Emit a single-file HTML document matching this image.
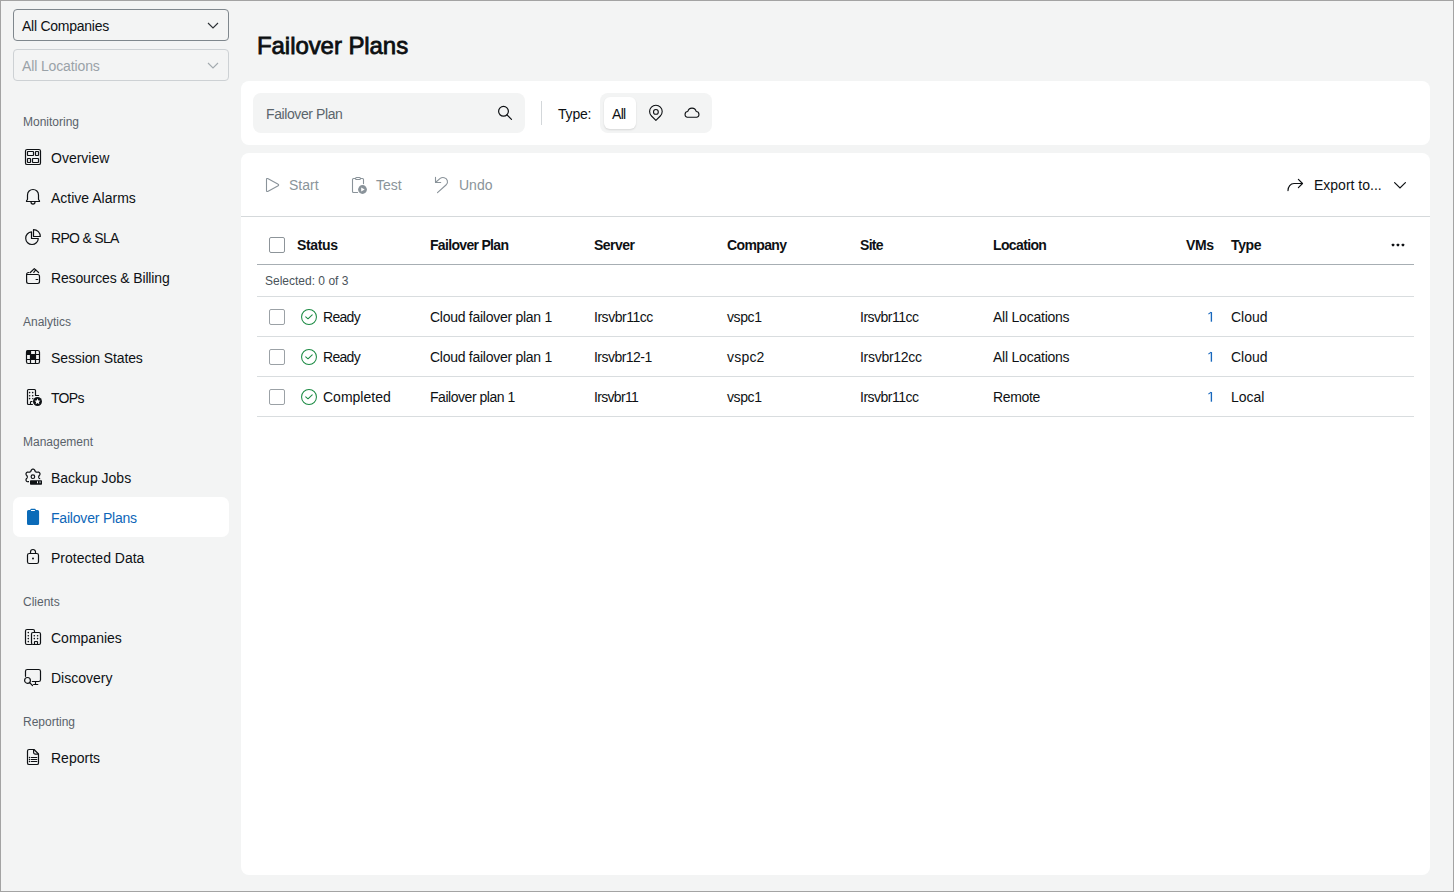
<!DOCTYPE html>
<html><head><meta charset="utf-8">
<style>
*{margin:0;padding:0;box-sizing:border-box}
html,body{width:1454px;height:892px;overflow:hidden}
body{position:relative;background:#f3f4f4;font-family:"Liberation Sans",sans-serif;color:#0e1114;font-size:14px}
.frame{position:absolute;left:0;top:0;width:1454px;height:892px;border:1px solid #a3a3a3;pointer-events:none;z-index:50}
.abs{position:absolute}
.t{position:absolute;white-space:nowrap;line-height:20px}
svg{position:absolute;overflow:visible}
.dd{position:absolute;left:13px;width:216px;height:32px;border:1px solid #7f878d;border-radius:4px}
.dd2{border-color:#cdd1d4}
.sec{position:absolute;left:23px;font-size:12px;line-height:16px;color:#59626a}
.item{position:absolute;left:13px;width:216px;height:40px;border-radius:7px}
.nv{left:51px;color:#0e1114}
.active{background:#fff}
.nv.active{background:none;color:#0d66b8}
.card{position:absolute;left:241px;width:1189px;background:#fff;border-radius:8px}
.hd{font-weight:700;letter-spacing:-0.35px}
.line{position:absolute;height:1px;background:#d9dddf}
.cb{position:absolute;width:16px;height:16px;border:1.5px solid #9ba1a6;border-radius:2px;background:#fff}
.gray{color:#8a949a}
.blue{color:#1f6dbb}
</style></head>
<body>
<div class="frame"></div>

<div class="dd" style="top:9px"></div>
<div class="t" style="left:22px;top:16px;letter-spacing:-0.25px">All Companies</div>
<svg style="left:207px;top:22px" width="12" height="7" viewBox="0 0 12 7"><path d="M1 1l5 5 5-5" fill="none" stroke="#2b3034" stroke-width="1.1"/></svg>
<div class="dd dd2" style="top:49px"></div>
<div class="t" style="left:22px;top:56px;color:#9aa2a8;letter-spacing:-0.13px">All Locations</div>
<svg style="left:207px;top:62px" width="12" height="7" viewBox="0 0 12 7"><path d="M1 1l5 5 5-5" fill="none" stroke="#a3aaaf" stroke-width="1.1"/></svg>

<div class="sec" style="top:114px">Monitoring</div>
<div class="sec" style="top:314px">Analytics</div>
<div class="sec" style="top:434px">Management</div>
<div class="sec" style="top:594px">Clients</div>
<div class="sec" style="top:714px">Reporting</div>

<div class="item" style="top:137px"></div><svg style="left:20px;top:144px" width="26" height="26" viewBox="0 0 26 26"><g stroke="#0e1114" stroke-width="1.2" fill="none" stroke-linecap="round" stroke-linejoin="round"><rect x="5.5" y="5.5" width="15" height="15" rx="1.6"/><rect x="7.5" y="7.5" width="6" height="4" rx="0.5"/><rect x="15.5" y="7.5" width="3" height="4" rx="0.5"/><rect x="7.5" y="14.5" width="3" height="4" rx="0.5"/><rect x="12.5" y="14.5" width="6" height="4" rx="0.5"/></g></svg><div class="t nv" style="top:148px;letter-spacing:0px">Overview</div>
<div class="item" style="top:177px"></div><svg style="left:20px;top:184px" width="26" height="26" viewBox="0 0 26 26"><g stroke="#0e1114" stroke-width="1.2" fill="none" stroke-linecap="round" stroke-linejoin="round"><path d="M7.5 15.2V11C7.5 7.8 10 5.5 13 5.5S18.5 7.8 18.5 11V15.2C18.5 15.9 19.5 16.3 19.5 17V17.5H6.5V17C6.5 16.3 7.5 15.9 7.5 15.2Z"/><path d="M11 18.1A2 2 0 0 0 15 18.1"/></g></svg><div class="t nv" style="top:188px;letter-spacing:0px">Active Alarms</div>
<div class="item" style="top:217px"></div><svg style="left:20px;top:224px" width="26" height="26" viewBox="0 0 26 26"><g stroke="#0e1114" stroke-width="1.2" fill="none" stroke-linecap="round" stroke-linejoin="round"><path d="M11.5 7.9A6.3 6.3 0 1 0 18.3 14.5H11.5Z"/><path d="M13.5 5.7V12.5H20.3A6.8 6.8 0 0 0 13.5 5.7Z"/></g></svg><div class="t nv" style="top:228px;letter-spacing:-0.7px">RPO &amp; SLA</div>
<div class="item" style="top:257px"></div><svg style="left:20px;top:264px" width="26" height="26" viewBox="0 0 26 26"><g stroke="#0e1114" stroke-width="1.2" fill="none" stroke-linecap="round" stroke-linejoin="round"><path d="M6.6 10.5H17.6A1.9 1.9 0 0 1 19.5 12.4V17.6A1.9 1.9 0 0 1 17.6 19.5H8.5A1.9 1.9 0 0 1 6.6 17.6V10.5A2 2 0 0 1 8.6 8.5H9"/><path d="M10.3 8.5L14.3 4.6L18.6 8.5"/><path d="M13.8 8.4L15.7 5.9"/><path d="M16.1 15.5H17.7"/></g></svg><div class="t nv" style="top:268px;letter-spacing:-0.15px">Resources &amp; Billing</div>
<div class="item" style="top:337px"></div><svg style="left:20px;top:344px" width="26" height="26" viewBox="0 0 26 26"><g stroke="#0e1114" stroke-width="1.2" fill="none" stroke-linecap="round" stroke-linejoin="round"><rect x="6.5" y="6.5" width="13" height="13" rx="1.8"/><path d="M10.5 6.5V19.5M15.5 6.5V19.5M6.5 10.5H19.5M6.5 15.5H19.5"/></g><path d="M8.3 6H11V11H6V8.3A2.3 2.3 0 0 1 8.3 6Z" fill="#0e1114"/><rect x="10" y="10" width="6" height="6" fill="#0e1114"/></svg><div class="t nv" style="top:348px;letter-spacing:-0.12px">Session States</div>
<div class="item" style="top:377px"></div><svg style="left:20px;top:384px" width="26" height="26" viewBox="0 0 26 26"><g stroke="#0e1114" stroke-width="1.2" fill="none" stroke-linecap="round" stroke-linejoin="round"><path d="M12.4 20.5H8.5A1 1 0 0 1 7.5 19.5V6.5A1 1 0 0 1 8.5 5.5H14.5A1 1 0 0 1 15.5 6.5V11.5H18.6"/><path d="M10.5 20.5V18.3A0.8 0.8 0 0 1 11.3 17.5H12"/></g><g fill="#0e1114"><circle cx="9.6" cy="8.6" r="0.8"/><circle cx="12.7" cy="8.6" r="0.8"/><circle cx="9.6" cy="11.7" r="0.8"/><circle cx="12.7" cy="11.7" r="0.8"/><circle cx="9.6" cy="14.6" r="0.8"/><circle cx="12.7" cy="14.6" r="0.7"/><circle cx="17.5" cy="17.5" r="4.5"/></g><path d="M17.5 14.5L18.35 16.55L20.5 16.7L18.85 18.05L19.35 20.2L17.5 19.05L15.65 20.2L16.15 18.05L14.5 16.7L16.65 16.55Z" fill="#fff"/></svg><div class="t nv" style="top:388px;letter-spacing:-0.7px">TOPs</div>
<div class="item" style="top:457px"></div><svg style="left:20px;top:464px" width="26" height="26" viewBox="0 0 26 26"><path d="M18.70 12.90 L18.71 13.10 L18.75 13.30 L18.81 13.51 L18.90 13.73 L19.01 13.96 L19.15 14.21 L19.34 14.48 L19.70 14.82 L19.86 15.13 L19.95 15.43 L19.99 15.73 L19.99 16.01 L19.95 16.29 L19.87 16.55 L19.75 16.80 L19.60 17.02 L19.41 17.23 L19.19 17.40 L18.94 17.54 L18.67 17.65 L18.36 17.73 L18.01 17.74 L17.54 17.60 L17.21 17.57 L16.92 17.58 L16.67 17.59 L16.44 17.63 L16.22 17.68 L16.03 17.75 L15.85 17.84 L15.68 17.95 L15.53 18.08 L15.38 18.24 L15.23 18.42 L15.09 18.64 L14.94 18.88 L14.80 19.18 L14.69 19.66 L14.50 19.95 L14.28 20.18 L14.05 20.37 L13.80 20.51 L13.54 20.62 L13.27 20.68 L13.00 20.70 L12.73 20.68 L12.46 20.62 L12.20 20.51 L11.95 20.37 L11.72 20.18 L11.50 19.95 L11.31 19.66 L11.20 19.18 L11.06 18.88 L10.91 18.64 L10.77 18.42 L10.62 18.24 L10.47 18.08 L10.32 17.95 L10.15 17.84 L9.97 17.75 L9.78 17.68 L9.56 17.63 L9.33 17.59 L9.08 17.58 L8.79 17.57 L8.46 17.60 L7.99 17.74 L7.64 17.73 L7.33 17.65 L7.06 17.54 L6.81 17.40 L6.59 17.23 L6.40 17.02 L6.25 16.80 L6.13 16.55 L6.05 16.29 L6.01 16.01 L6.01 15.73 L6.05 15.43 L6.14 15.13 L6.30 14.82 L6.66 14.48 L6.85 14.21 L6.99 13.96 L7.10 13.73 L7.19 13.51 L7.25 13.30 L7.29 13.10 L7.30 12.90 L7.29 12.70 L7.25 12.50 L7.19 12.29 L7.10 12.07 L6.99 11.84 L6.85 11.59 L6.66 11.32 L6.30 10.98 L6.14 10.67 L6.05 10.37 L6.01 10.07 L6.01 9.79 L6.05 9.51 L6.13 9.25 L6.25 9.00 L6.40 8.78 L6.59 8.57 L6.81 8.40 L7.06 8.26 L7.33 8.15 L7.64 8.07 L7.99 8.06 L8.46 8.20 L8.79 8.23 L9.08 8.22 L9.33 8.21 L9.56 8.17 L9.78 8.12 L9.97 8.05 L10.15 7.96 L10.32 7.85 L10.47 7.72 L10.62 7.56 L10.77 7.38 L10.91 7.16 L11.06 6.92 L11.20 6.62 L11.31 6.14 L11.50 5.85 L11.72 5.62 L11.95 5.43 L12.20 5.29 L12.46 5.18 L12.73 5.12 L13.00 5.10 L13.27 5.12 L13.54 5.18 L13.80 5.29 L14.05 5.43 L14.28 5.62 L14.50 5.85 L14.69 6.14 L14.80 6.62 L14.94 6.92 L15.09 7.16 L15.23 7.38 L15.38 7.56 L15.53 7.72 L15.68 7.85 L15.85 7.96 L16.03 8.05 L16.22 8.12 L16.44 8.17 L16.67 8.21 L16.92 8.22 L17.21 8.23 L17.54 8.20 L18.01 8.06 L18.36 8.07 L18.67 8.15 L18.94 8.26 L19.19 8.40 L19.41 8.57 L19.60 8.78 L19.75 9.00 L19.87 9.25 L19.95 9.51 L19.99 9.79 L19.99 10.07 L19.95 10.37 L19.86 10.67 L19.70 10.98 L19.34 11.32 L19.15 11.59 L19.01 11.84 L18.90 12.07 L18.81 12.29 L18.75 12.50 L18.71 12.70 L18.70 12.90Z" stroke="#0e1114" stroke-width="1.2" fill="none" stroke-linecap="round" stroke-linejoin="round"/><rect x="9" y="15.1" width="14" height="7" fill="#f3f4f4"/><rect x="10" y="16.2" width="12" height="4.6" rx="0.8" fill="#0e1114"/><rect x="17" y="17.3" width="1" height="1.9" fill="#f3f4f4"/><rect x="19.3" y="17.3" width="1.5" height="1.9" fill="#8d9296"/><circle cx="12.9" cy="12.7" r="1.8" stroke="#0e1114" stroke-width="1.2" fill="none" stroke-linecap="round" stroke-linejoin="round"/></svg><div class="t nv" style="top:468px;letter-spacing:0px">Backup Jobs</div>
<div class="item active" style="top:497px"></div><svg style="left:20px;top:504px" width="26" height="26" viewBox="0 0 26 26"><path d="M8.5 5.9H10.3A1.1 1.1 0 0 1 11.3 4.8H14.8A1.1 1.1 0 0 1 15.8 5.9H17.6A1.5 1.5 0 0 1 19.1 7.4V19.4A1.5 1.5 0 0 1 17.6 20.9H8.5A1.5 1.5 0 0 1 7 19.4V7.4A1.5 1.5 0 0 1 8.5 5.9Z" fill="#0b6bb8"/><rect x="10.9" y="6.1" width="4.1" height="1" rx="0.5" fill="#fff"/></svg><div class="t nv active" style="top:508px;letter-spacing:-0.2px">Failover Plans</div>
<div class="item" style="top:537px"></div><svg style="left:20px;top:544px" width="26" height="26" viewBox="0 0 26 26"><g stroke="#0e1114" stroke-width="1.2" fill="none" stroke-linecap="round" stroke-linejoin="round"><path d="M10.5 9.5V8A2.5 2.5 0 0 1 15.5 8V9.5"/><rect x="7.5" y="9.5" width="11" height="10" rx="1.8"/></g><circle cx="13" cy="14.4" r="1" fill="#0e1114"/></svg><div class="t nv" style="top:548px;letter-spacing:0px">Protected Data</div>
<div class="item" style="top:617px"></div><svg style="left:20px;top:624px" width="26" height="26" viewBox="0 0 26 26"><g stroke="#0e1114" stroke-width="1.2" fill="none" stroke-linecap="round" stroke-linejoin="round"><path d="M11.5 20.5H7A1.5 1.5 0 0 1 5.5 19V7A1.5 1.5 0 0 1 7 5.5H13A1.5 1.5 0 0 1 14.5 7V8.5"/><rect x="11.5" y="8.5" width="9" height="12" rx="1.5"/><path d="M14.5 20.5V18A0.5 0.5 0 0 1 15 17.5H17A0.5 0.5 0 0 1 17.5 18V20.5"/></g><g fill="#0e1114"><circle cx="8.3" cy="8.6" r="0.8"/><circle cx="8.3" cy="11.7" r="0.8"/><circle cx="8.3" cy="14.6" r="0.8"/><circle cx="8.3" cy="17.6" r="0.8"/><circle cx="14.3" cy="11.7" r="0.8"/><circle cx="17.6" cy="11.7" r="0.8"/><circle cx="14.3" cy="14.6" r="0.8"/><circle cx="17.6" cy="14.6" r="0.8"/></g></svg><div class="t nv" style="top:628px;letter-spacing:0px">Companies</div>
<div class="item" style="top:657px"></div><svg style="left:20px;top:664px" width="26" height="26" viewBox="0 0 26 26"><g stroke="#0e1114" stroke-width="1.2" fill="none" stroke-linecap="round" stroke-linejoin="round"><path d="M5.5 12.3V7.3A1.8 1.8 0 0 1 7.3 5.5H18.7A1.8 1.8 0 0 1 20.5 7.3V15.7A1.8 1.8 0 0 1 18.7 17.5H12.3"/><path d="M15.5 17.5V20.5M13.6 20.5H17.8"/><circle cx="7.5" cy="16.4" r="2.9"/><path d="M9.6 18.6L12.5 21.5"/></g></svg><div class="t nv" style="top:668px;letter-spacing:0px">Discovery</div>
<div class="item" style="top:737px"></div><svg style="left:20px;top:744px" width="26" height="26" viewBox="0 0 26 26"><g stroke="#0e1114" stroke-width="1.2" fill="none" stroke-linecap="round" stroke-linejoin="round"><path d="M18.5 10V18.9A1.6 1.6 0 0 1 16.9 20.5H9.1A1.6 1.6 0 0 1 7.5 18.9V7.1A1.6 1.6 0 0 1 9.1 5.5H14Z"/><path d="M13.6 5.7V8.6A1.5 1.5 0 0 0 15.1 10.1H18.3"/><path d="M11.3 13.5H16.8M11.3 15.5H16.8M11.3 17.5H16.8"/></g><g fill="#0e1114"><circle cx="9.5" cy="13.5" r="0.75"/><circle cx="9.5" cy="15.5" r="0.75"/><circle cx="9.5" cy="17.5" r="0.75"/></g></svg><div class="t nv" style="top:748px;letter-spacing:0px">Reports</div>

<div class="t" style="left:257px;top:30px;font-size:24px;line-height:32px;font-weight:400;-webkit-text-stroke:0.8px #0c0f11;letter-spacing:-0.07px;color:#0c0f11">Failover Plans</div>

<div class="card" style="top:81px;height:64px"></div>
<div class="abs" style="left:253px;top:93px;width:272px;height:40px;background:#f3f4f4;border-radius:8px"></div>
<div class="t" style="left:266px;top:104px;color:#5b656c;letter-spacing:-0.4px">Failover Plan</div>
<svg style="left:490px;top:98px" width="30" height="30" viewBox="0 0 30 30"><circle cx="13.5" cy="13.3" r="4.9" fill="none" stroke="#0e1114" stroke-width="1.2"/><path d="M17 16.8L21.5 21.3" stroke="#0e1114" stroke-width="1.2" stroke-linecap="round"/></svg>
<div class="abs" style="left:541px;top:101px;width:1px;height:24px;background:#d3d7da"></div>
<div class="t" style="left:558px;top:104px;letter-spacing:-0.2px">Type:</div>
<div class="abs" style="left:600px;top:93px;width:112px;height:40px;background:#f3f4f4;border-radius:8px"></div>
<div class="abs" style="left:604px;top:97px;width:32px;height:32px;background:#fff;border-radius:6px;box-shadow:0 1px 2px rgba(0,0,0,0.12)"></div>
<div class="t" style="left:612px;top:104px;letter-spacing:-0.7px">All</div>
<svg style="left:640px;top:96px" width="30" height="34" viewBox="0 0 30 34"><path d="M15.9 24.4L11.5 20A6.3 6.3 0 1 1 20.3 20Z" fill="none" stroke="#0e1114" stroke-width="1.1" stroke-linejoin="round"/><circle cx="15.9" cy="15.9" r="2.4" fill="none" stroke="#0e1114" stroke-width="1.1"/></svg>
<svg style="left:676px;top:96px" width="30" height="34" viewBox="0 0 30 34"><path d="M11.2 21.2H20.8A2.9 2.9 0 0 0 20.2 15.5A4.3 4.3 0 0 0 11.8 15.5A2.9 2.9 0 0 0 11.2 21.2Z" fill="none" stroke="#0e1114" stroke-width="1.1" stroke-linejoin="round"/></svg>

<div class="card" style="top:153px;height:722px"></div>
<svg style="left:260px;top:172px" width="30" height="26" viewBox="0 0 30 26"><path d="M6.5 7.3C6.5 6.6 7.1 6.3 7.7 6.6L18.2 12.3C18.8 12.6 18.8 13.4 18.2 13.7L7.7 19.4C7.1 19.7 6.5 19.4 6.5 18.7Z" fill="none" stroke="#8a939a" stroke-width="1.1" stroke-linejoin="round"/></svg>
<div class="t gray" style="left:289px;top:175px">Start</div>
<svg style="left:346px;top:172px" width="26" height="26" viewBox="0 0 26 26"><g fill="none" stroke="#8a939a" stroke-width="1.1" stroke-linecap="round"><path d="M11.6 20.5H7.5A1 1 0 0 1 6.5 19.5V7.5A1 1 0 0 1 7.5 6.5H9.5M14.5 6.5H16.5A1 1 0 0 1 17.5 7.5V11.6"/><rect x="9.5" y="5.5" width="5" height="2" rx="1"/></g><circle cx="16.5" cy="17.5" r="4.4" fill="#8a939a"/><path d="M15.2 15.4V19.6L18.7 17.5Z" fill="#fff"/></svg>
<div class="t gray" style="left:376px;top:175px">Test</div>
<svg style="left:428px;top:172px" width="26" height="26" viewBox="0 0 26 26"><g fill="none" stroke="#8a939a" stroke-width="1.1" stroke-linecap="round" stroke-linejoin="round"><path d="M7.5 5.4V10.5H12.7"/><path d="M8 10L12.2 6.4C14.5 4.8 18.2 5.5 19.3 8.5C19.9 10.2 19.3 11.8 18 13L9.5 20.6"/></g></svg>
<div class="t gray" style="left:459px;top:175px">Undo</div>
<svg style="left:1282px;top:172px" width="26" height="26" viewBox="0 0 26 26"><g fill="none" stroke="#0e1114" stroke-width="1.2" stroke-linecap="round" stroke-linejoin="round"><path d="M6 18.6C6 14.6 8.5 11.5 12 11.5H20.4"/><path d="M16.4 7.4L20.5 11.5L16.4 15.6"/></g></svg>
<div class="t" style="left:1314px;top:175px">Export to...</div>
<svg style="left:1392px;top:180px" width="16" height="12" viewBox="0 0 16 12"><path d="M2.6 2.6L8 8L13.4 2.6" fill="none" stroke="#0e1114" stroke-width="1.2" stroke-linecap="round"/></svg>
<div class="line" style="left:241px;top:216px;width:1189px;background:#d5d9db"></div>

<div class="cb" style="left:269px;top:237px;border:1.1px solid #8d9499"></div>
<div class="t hd" style="left:297px;top:235px">Status</div>
<div class="t hd" style="left:430px;top:235px;letter-spacing:-0.68px">Failover Plan</div>
<div class="t hd" style="left:594px;top:235px;letter-spacing:-0.55px">Server</div>
<div class="t hd" style="left:727px;top:235px;letter-spacing:-0.62px">Company</div>
<div class="t hd" style="left:860px;top:235px;letter-spacing:-0.68px">Site</div>
<div class="t hd" style="left:993px;top:235px;letter-spacing:-0.63px">Location</div>
<div class="t hd" style="left:1186px;top:235px">VMs</div>
<div class="t hd" style="left:1231px;top:235px">Type</div>
<svg style="left:1390px;top:242px" width="16" height="6" viewBox="0 0 16 6"><g fill="#0e1114"><rect x="1.8" y="1.7" width="2.5" height="2.5" rx="0.6"/><rect x="6.7" y="1.7" width="2.5" height="2.5" rx="0.6"/><rect x="11.7" y="1.7" width="2.5" height="2.5" rx="0.6"/></g></svg>
<div class="line" style="left:257px;top:264px;width:1157px;background:#a7aeb3"></div>
<div class="t" style="left:265px;top:273px;font-size:12px;line-height:16px;color:#4a535a">Selected: 0 of 3</div>
<div class="line" style="left:257px;top:296px;width:1157px"></div>

<div class="cb" style="left:269px;top:309px"></div>
<svg style="left:301px;top:309px" width="16" height="16" viewBox="0 0 16 16"><circle cx="8" cy="8" r="7.45" fill="none" stroke="#1b8a43" stroke-width="1.05"/><path d="M4.7 7.9L7 9.8L11.2 5.9" fill="none" stroke="#1b8a43" stroke-width="1.05" stroke-linecap="round" stroke-linejoin="round"/></svg>
<div class="t" style="left:323px;top:307px;letter-spacing:-0.7px">Ready</div>
<div class="t" style="left:430px;top:307px;letter-spacing:-0.27px">Cloud failover plan 1</div>
<div class="t" style="left:594px;top:307px;letter-spacing:-0.47px">Irsvbr11cc</div>
<div class="t" style="left:727px;top:307px;letter-spacing:-0.4px">vspc1</div>
<div class="t" style="left:860px;top:307px;letter-spacing:-0.5px">Irsvbr11cc</div>
<div class="t" style="left:993px;top:307px;letter-spacing:-0.23px">All Locations</div>
<svg style="left:1204px;top:309px" width="12" height="14" viewBox="0 0 12 14"><path d="M7.4 3.1V12.7" fill="none" stroke="#1767bd" stroke-width="1.35"/><path d="M7.2 3.1L4.4 5.1" fill="none" stroke="#1767bd" stroke-width="1.1"/></svg>
<div class="t" style="left:1231px;top:307px">Cloud</div>
<div class="line" style="left:257px;top:336px;width:1157px"></div>
<div class="cb" style="left:269px;top:349px"></div>
<svg style="left:301px;top:349px" width="16" height="16" viewBox="0 0 16 16"><circle cx="8" cy="8" r="7.45" fill="none" stroke="#1b8a43" stroke-width="1.05"/><path d="M4.7 7.9L7 9.8L11.2 5.9" fill="none" stroke="#1b8a43" stroke-width="1.05" stroke-linecap="round" stroke-linejoin="round"/></svg>
<div class="t" style="left:323px;top:347px;letter-spacing:-0.7px">Ready</div>
<div class="t" style="left:430px;top:347px;letter-spacing:-0.27px">Cloud failover plan 1</div>
<div class="t" style="left:594px;top:347px;letter-spacing:-0.53px">Irsvbr12-1</div>
<div class="t" style="left:727px;top:347px;letter-spacing:0.2px">vspc2</div>
<div class="t" style="left:860px;top:347px;letter-spacing:-0.29px">Irsvbr12cc</div>
<div class="t" style="left:993px;top:347px;letter-spacing:-0.23px">All Locations</div>
<svg style="left:1204px;top:349px" width="12" height="14" viewBox="0 0 12 14"><path d="M7.4 3.1V12.7" fill="none" stroke="#1767bd" stroke-width="1.35"/><path d="M7.2 3.1L4.4 5.1" fill="none" stroke="#1767bd" stroke-width="1.1"/></svg>
<div class="t" style="left:1231px;top:347px">Cloud</div>
<div class="line" style="left:257px;top:376px;width:1157px"></div>
<div class="cb" style="left:269px;top:389px"></div>
<svg style="left:301px;top:389px" width="16" height="16" viewBox="0 0 16 16"><circle cx="8" cy="8" r="7.45" fill="none" stroke="#1b8a43" stroke-width="1.05"/><path d="M4.7 7.9L7 9.8L11.2 5.9" fill="none" stroke="#1b8a43" stroke-width="1.05" stroke-linecap="round" stroke-linejoin="round"/></svg>
<div class="t" style="left:323px;top:387px;letter-spacing:0px">Completed</div>
<div class="t" style="left:430px;top:387px;letter-spacing:-0.46px">Failover plan 1</div>
<div class="t" style="left:594px;top:387px;letter-spacing:-0.67px">Irsvbr11</div>
<div class="t" style="left:727px;top:387px;letter-spacing:-0.4px">vspc1</div>
<div class="t" style="left:860px;top:387px;letter-spacing:-0.5px">Irsvbr11cc</div>
<div class="t" style="left:993px;top:387px;letter-spacing:-0.36px">Remote</div>
<svg style="left:1204px;top:389px" width="12" height="14" viewBox="0 0 12 14"><path d="M7.4 3.1V12.7" fill="none" stroke="#1767bd" stroke-width="1.35"/><path d="M7.2 3.1L4.4 5.1" fill="none" stroke="#1767bd" stroke-width="1.1"/></svg>
<div class="t" style="left:1231px;top:387px">Local</div>
<div class="line" style="left:257px;top:416px;width:1157px"></div>

</body></html>
